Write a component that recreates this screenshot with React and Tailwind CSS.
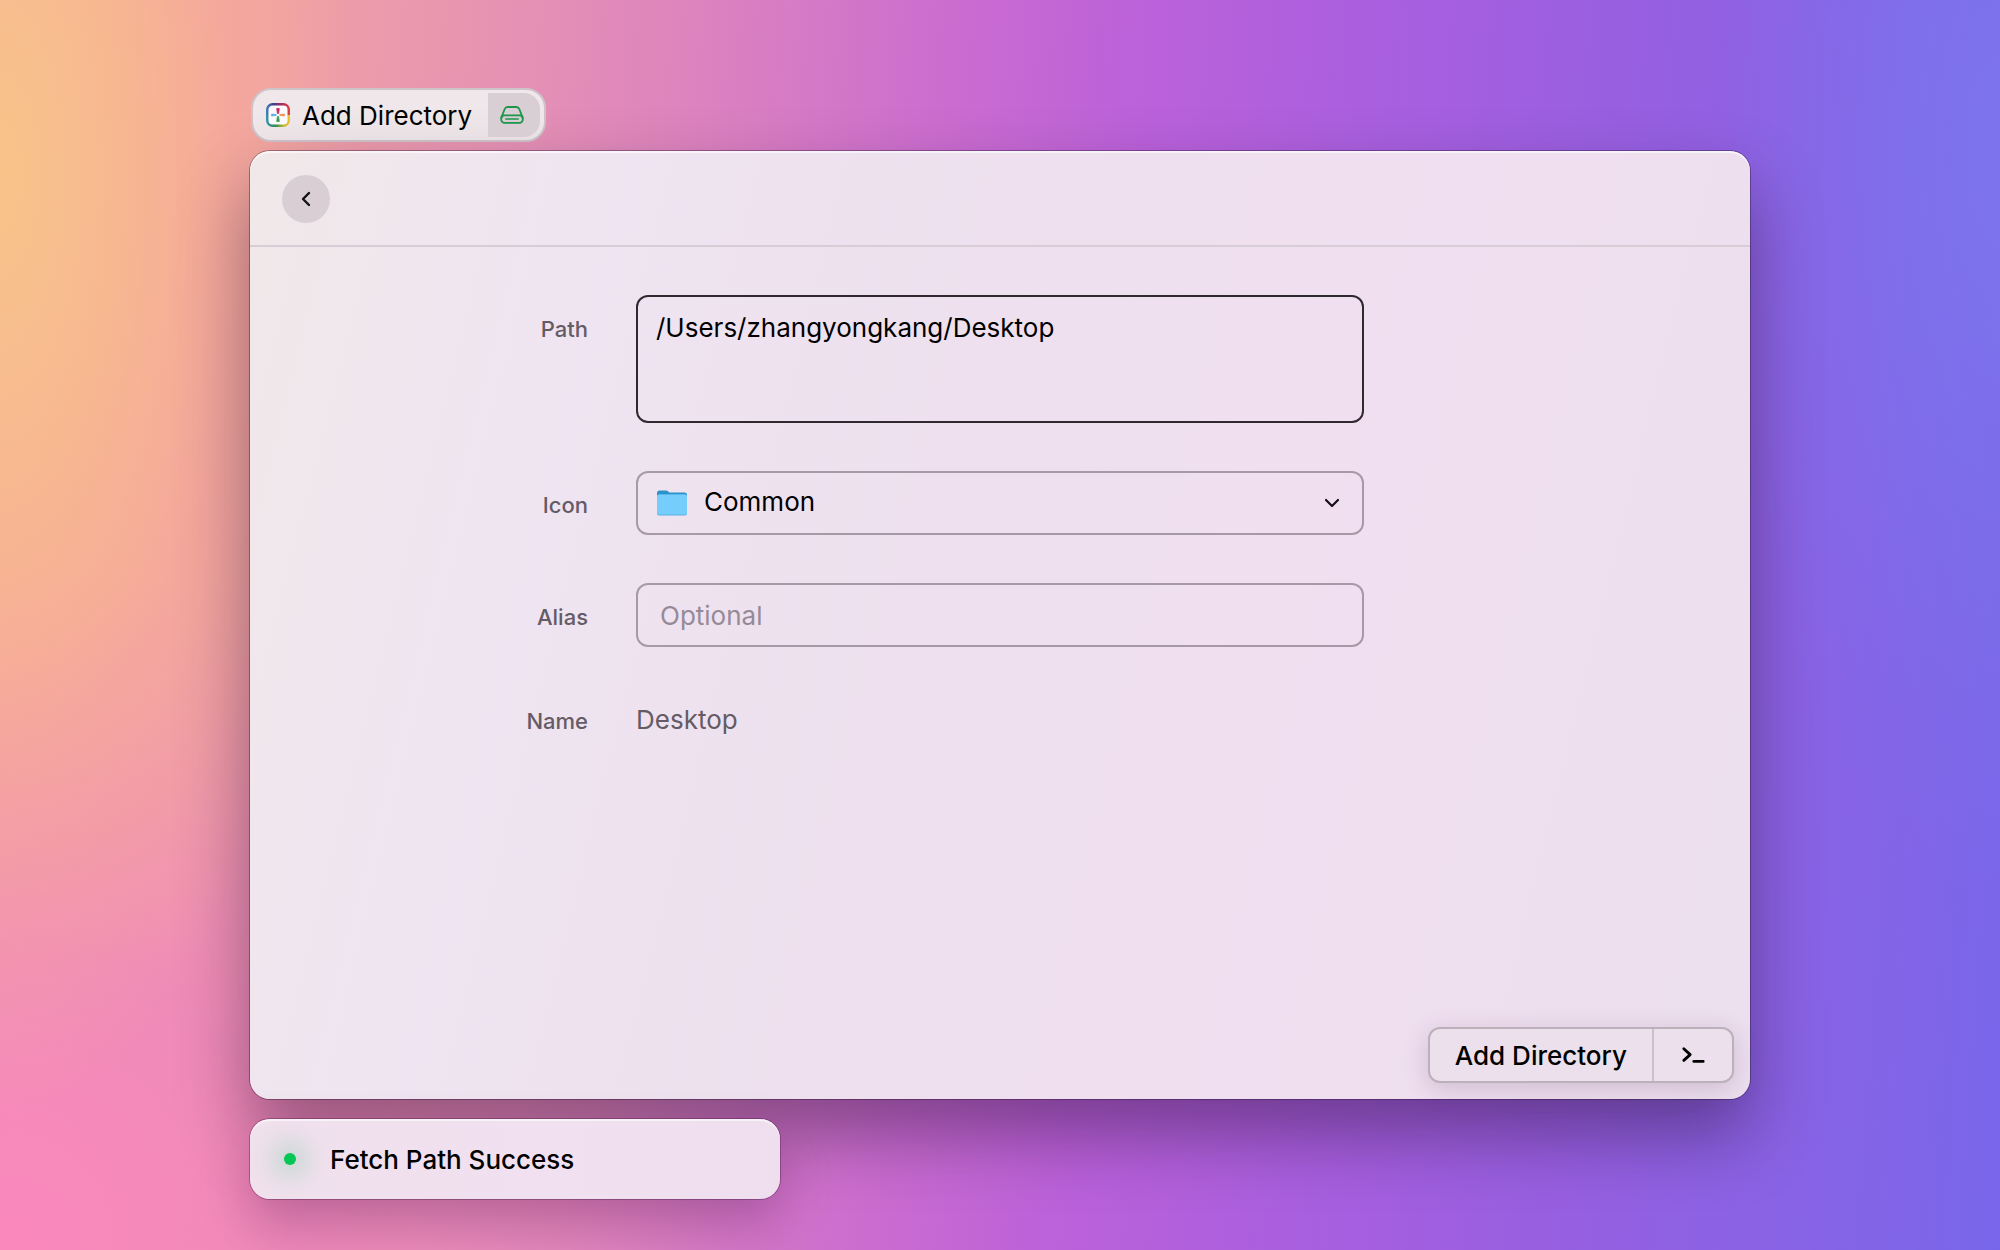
import { useState } from "react";

function AppIcon() {
  return (
    <svg viewBox="0 0 24 24" className="size-6 shrink-0" fill="none" aria-hidden="true">
      <defs>
        <linearGradient id="ringTop" x1="0" y1="0" x2="1" y2="0">
          <stop offset="0" stopColor="#3f78b8" />
          <stop offset="0.3" stopColor="#3c3f86" />
          <stop offset="0.65" stopColor="#a82a62" />
          <stop offset="1" stopColor="#dc3a3c" />
        </linearGradient>
        <linearGradient id="ringBottom" x1="0" y1="0" x2="1" y2="0">
          <stop offset="0" stopColor="#2f8fa6" />
          <stop offset="0.4" stopColor="#2f8f4a" />
          <stop offset="0.75" stopColor="#b9bb3c" />
          <stop offset="1" stopColor="#edc02c" />
        </linearGradient>
      </defs>
      <rect x="1.25" y="1.25" width="21.5" height="21.5" rx="5" fill="#fbf9fb" />
      <path d="M1.25 12V6.5A5.25 5.25 0 0 1 6.5 1.25h11a5.25 5.25 0 0 1 5.25 5.25V12" stroke="url(#ringTop)" strokeWidth="2.4" />
      <path d="M1.25 12v5.5a5.25 5.25 0 0 0 5.25 5.25h11a5.25 5.25 0 0 0 5.25-5.25V12" stroke="url(#ringBottom)" strokeWidth="2.4" />
      <path d="M10.7 5.6h2.600L12.600 10.500h-1.200z" fill="#cf2460" stroke="#cf2460" strokeWidth="0.800" strokeLinejoin="round" />
      <path d="M10.700 18.400h2.600L12.600 13.500h-1.200z" fill="#3a9a52" stroke="#3a9a52" strokeWidth="0.800" strokeLinejoin="round" />
      <path d="M5.600 11v2l4.600-.600v-.800z" fill="#58b0dc" stroke="#58b0dc" strokeWidth="0.800" strokeLinejoin="round" />
      <path d="M18.400 11v2l-4.600-.600v-.800z" fill="#ee8f52" stroke="#ee8f52" strokeWidth="0.800" strokeLinejoin="round" />
    </svg>
  );
}

function DriveIcon() {
  return (
    <svg viewBox="0 0 24 18" className="h-[18px] w-6" fill="none" stroke="#1c964a" strokeWidth="1.8" strokeLinecap="round" strokeLinejoin="round" aria-hidden="true">
      <path d="M1.400 11.600 4.700 3A3.200 3.200 0 0 1 7.600 1h8.800a3.200 3.200 0 0 1 2.900 2l3.300 8.600" />
      <path d="M4.600 9.300h14.800a3.400 3.400 0 0 1 3.400 3.300v1a3.300 3.300 0 0 1-3.400 3.300H4.600a3.300 3.300 0 0 1-3.400-3.300v-1a3.400 3.400 0 0 1 3.400-3.300z" />
      <path d="M5.800 13h12.400" strokeWidth="1.600" />
    </svg>
  );
}

function FolderIcon() {
  return (
    <svg viewBox="0 0 32 26" className="h-[26px] w-8 shrink-0" aria-hidden="true">
      <path d="M1 3.200C1 1.400 1.900.6 3.600.6h6.200c1 0 1.700.3 2.400.9l1.200 1.100h15.200c1.600 0 2.400.9 2.400 2.400V12H1z" fill="#2b93cc" />
      <rect x="1" y="4.600" width="30" height="21" rx="2" fill="#5bb4e4" />
      <rect x="1" y="4.600" width="30" height="20" rx="2" fill="#74cdfb" />
    </svg>
  );
}

const row = "grid grid-cols-[minmax(0,1fr)_minmax(0,728px)_minmax(0,1fr)] gap-12";
const label = "text-right text-[22px] leading-8 font-medium text-[#655b65]";
const field = "w-full min-w-0 rounded-xl border-2 bg-transparent text-[26px] leading-8 outline-none";

export default function App() {
  const [path, setPath] = useState("/Users/zhangyongkang/Desktop");
  const [icon, setIcon] = useState("Common");
  const [alias, setAlias] = useState("");

  return (
    <main className="min-h-screen bg-[radial-gradient(ellipse_18%_75%_at_0%_14%,#f8c48a_0%,#f8bb8ed0_35%,#f8b09470_65%,transparent_100%),radial-gradient(ellipse_34%_55%_at_0%_100%,#fb88bd_0%,#ef84bfc0_45%,transparent_100%),radial-gradient(ellipse_14%_60%_at_100%_12%,#7c74ec_0%,transparent_100%),linear-gradient(94deg,#f6a69c_0%,#f0a0a4_13%,#e693b3_24%,#dc82bf_34%,#ca6cd0_46%,#bb61da_55%,#a85fdf_67%,#985fe1_78%,#8863e5_90%,#7866ea_100%)] px-[12.5%] pt-[88px] pb-[51px] font-[Inter,sans-serif] text-black">
      <div className="ml-px flex h-[54px] w-fit items-center rounded-[20px] border-2 border-[#cdc3c9] bg-[#efe7ea] pr-1 pl-[13px]">
        <AppIcon />
        <span className="ml-3 pt-px text-[26px] leading-8">Add Directory</span>
        <span className="ml-4 flex h-11 w-[52px] items-center justify-center rounded-r-2xl bg-[#d8ced4] pr-1">
          <DriveIcon />
        </span>
      </div>

      <section className="mt-[9px] flex min-h-[948px] flex-col rounded-[20px] bg-[linear-gradient(104deg,#f1e8e9_0%,#f0e6ee_12%,#efe4f1_22%,#eee0ee_45%,#f0dff0_70%,#ecdfee_100%)] shadow-[0_0_0_1px_rgba(40,20,50,0.4),inset_0_2px_0_rgba(255,255,255,0.6),0_36px_70px_rgba(30,10,40,0.42)]">
        <header className="flex h-24 items-center border-b-2 border-[#d8ccd6] px-8 pt-[2px]">
          <button type="button" aria-label="Back" className="flex size-12 items-center justify-center rounded-full bg-[#d8ced4]">
            <svg viewBox="0 0 10 16" className="h-4 w-[10px]" fill="none" stroke="#111" strokeWidth="2.4" strokeLinecap="round" strokeLinejoin="round" aria-hidden="true">
              <path d="M8 2 2 8l6 6" />
            </svg>
          </button>
        </header>

        <form id="directory" onSubmit={(e) => e.preventDefault()} className="flex flex-1 flex-col gap-12 pt-12">
          <div className={row}>
            <label htmlFor="path" className={label + " pt-[18px]"}>Path</label>
            <textarea id="path" value={path} onChange={(e) => setPath(e.target.value)} className={field + " h-32 resize-none border-[#30292f] px-[18px] py-[15px]"} />
          </div>
          <div className={row}>
            <label htmlFor="icon" className={label + " pt-[18px]"}>Icon</label>
            <div className="relative flex min-w-0">
              <select id="icon" value={icon} onChange={(e) => setIcon(e.target.value)} className={field + " h-16 appearance-none border-[#a899a8] pr-14 pb-[2px] pl-[66px]"}>
                <option>Common</option>
                <option>Project</option>
              </select>
              <span className="pointer-events-none absolute inset-y-0 left-5 flex items-center"><FolderIcon /></span>
              <svg viewBox="0 0 16 10" className="pointer-events-none absolute top-[27px] right-6 h-[10px] w-4" fill="none" stroke="#150f15" strokeWidth="2.2" strokeLinecap="round" strokeLinejoin="round" aria-hidden="true">
                <path d="m2 2 6 6 6-6" />
              </svg>
            </div>
          </div>
          <div className={row}>
            <label htmlFor="alias" className={label + " pt-[18px]"}>Alias</label>
            <input id="alias" type="text" placeholder="Optional" value={alias} onChange={(e) => setAlias(e.target.value)} className={field + " h-16 border-[#a899a8] px-[22px] placeholder:text-[#968a97]"} />
          </div>
          <div className={row + " items-baseline pt-[9px]"}>
            <span className={label}>Name</span>
            <output className="text-[26px] leading-8 text-[#655b65]">Desktop</output>
          </div>
        </form>

        <footer className="flex justify-end px-4 pb-4">
          <div className="flex h-14 overflow-hidden rounded-xl border-2 border-[#bcb0bb] bg-[#ebe0eb] shadow-[0_6px_26px_rgba(90,50,90,0.2)]">
            <button type="submit" form="directory" className="border-r-2 border-[#cbc0ca] px-[25px] pt-px text-[26px] leading-8 font-medium">Add Directory</button>
            <button type="button" aria-label="Actions" className="flex w-[78px] items-center justify-center">
              <svg viewBox="0 0 24 18" className="h-[18px] w-6" fill="none" stroke="#000" strokeWidth="2.8" strokeLinecap="round" strokeLinejoin="round" aria-hidden="true">
                <path d="m2.800 2.800 6.400 5.800-6.400 5.800M12.800 15.400h9.400" />
              </svg>
            </button>
          </div>
        </footer>
      </section>

      <div role="status" className="mt-5 flex h-20 w-[530px] items-center rounded-[20px] bg-[linear-gradient(90deg,#f0e1ed,#f1e0f0_60%,#efdfee)] pl-[34px] shadow-[0_0_0_1px_rgba(60,20,60,0.35),inset_0_2px_0_rgba(255,255,255,0.6),0_24px_50px_rgba(70,10,70,0.28)]">
        <span className="size-3 rounded-full bg-[#06c755] shadow-[0_0_28px_8px_rgba(6,170,80,0.3)]" />
        <span className="ml-[34px] pt-px text-[26px] leading-8 font-medium">Fetch Path Success</span>
      </div>
    </main>
  );
}
